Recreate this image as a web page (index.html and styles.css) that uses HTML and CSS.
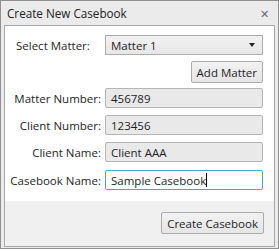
FILE: index.html
```html
<!DOCTYPE html>
<html lang="en">
<head>
  <meta charset="utf-8">
  <title>Create New Casebook</title>
  <link rel="stylesheet" href="styles.css">
</head>
<body>
  <div class="window">
    <div class="titlebar">
      <span class="title">Create New Casebook</span>
      <span class="close">&#x2715;</span>
    </div>

    <div class="client">
      <div class="form">
        <div class="row">
          <label class="label label-left">Select Matter:</label>
          <div class="select">
            <span>Matter 1</span>
            <span class="arrow"></span>
          </div>
        </div>

        <div class="row row-add">
          <span></span>
          <div class="add-wrap">
            <button class="btn">Add Matter</button>
          </div>
        </div>

        <div class="row row-first">
          <label class="label">Matter Number:</label>
          <div class="field readonly">456789</div>
        </div>

        <div class="row">
          <label class="label">Client Number:</label>
          <div class="field readonly">123456</div>
        </div>

        <div class="row">
          <label class="label">Client Name:</label>
          <div class="field readonly">Client AAA</div>
        </div>

        <div class="row row-last">
          <label class="label">Casebook Name:</label>
          <div class="field focused">Sample Casebook<span class="caret"></span></div>
        </div>
      </div>

      <div class="footer">
        <button class="btn btn-create">Create Casebook</button>
      </div>
    </div>
  </div>
</body>
</html>
```

FILE: styles.css
```css
body {
  margin: 0;
  background: #fff;
  font-family: "Open Sans", "Noto Sans", sans-serif;
  font-size: 11.5px;
  color: #1e1e1e;
}

.window {
  width: 279px;
  height: 249px;
  box-sizing: border-box;
  border: 1px solid #8f8f8f;
  background: #ebebeb;
  display: flex;
  flex-direction: column;
}

.titlebar {
  height: 24px;
  display: flex;
  align-items: center;
  justify-content: space-between;
  padding: 0 9px 0 6px;
}

.title {
  font-size: 11.7px;
  color: #222;
}

.close {
  font-size: 11px;
  color: #6a6a6a;
}

.client {
  flex: 1;
  margin: 0 3px 1px;
  border: 1px solid #a7a7a7;
  display: flex;
  flex-direction: column;
  background: #f0f0f0;
}

.form {
  background: #fff;
  padding: 9px 10px 11px 5px;
}

.row {
  display: grid;
  grid-template-columns: 91px 158px;
  column-gap: 4px;
  align-items: center;
  margin-top: 7px;
}

.row:first-child {
  margin-top: 0;
}

.row-add {
  margin-top: 6px;
}

.row-first {
  margin-top: 5px;
}

.row-last {
  margin-top: 8px;
}

.label {
  justify-self: end;
  white-space: nowrap;
}

.label-left {
  justify-self: start;
  margin-left: 6px;
}

.select {
  height: 20px;
  box-sizing: border-box;
  border: 1px solid #acacac;
  background: linear-gradient(#f2f2f2, #e6e6e6);
  display: flex;
  align-items: center;
  justify-content: space-between;
  padding: 0 7px 0 5px;
}

.arrow {
  width: 0;
  height: 0;
  border-left: 3px solid transparent;
  border-right: 3px solid transparent;
  border-top: 4px solid #222;
}

.add-wrap {
  display: flex;
  justify-content: flex-end;
}

.btn {
  font-family: inherit;
  font-size: 11.5px;
  color: #1e1e1e;
  height: 22px;
  padding: 0 5px;
  border: 1px solid #acacac;
  border-radius: 2px;
  background: linear-gradient(#f2f2f2, #e5e5e5);
}

.field {
  height: 20px;
  box-sizing: border-box;
  border: 1px solid #b5b5b5;
  border-radius: 2px;
  padding: 0 5px;
  display: flex;
  align-items: center;
}

.readonly {
  background: #e9e9e9;
}

.focused {
  background: #fff;
  border-color: #4aa3d4;
}

.caret {
  width: 1px;
  height: 14px;
  background: #000;
}

.footer {
  flex: 1;
  display: flex;
  justify-content: flex-end;
  align-items: flex-start;
  padding: 11px 10px 0 0;
}

.btn-create {
  height: 22px;
  padding: 0 5px;
}
```
